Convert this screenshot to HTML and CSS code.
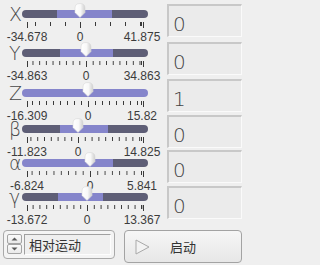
FILE: index.html
```html
<!DOCTYPE html>
<html>
<head>
<meta charset="utf-8">
<link rel="stylesheet" href="styles.css">
</head>
<body>
<svg class="defs" width="0" height="0" aria-hidden="true">
  <defs>
    <linearGradient id="tg" x1="0" x2="1" y1="0" y2="0">
      <stop offset="0" stop-color="#ffffff"/>
      <stop offset="0.55" stop-color="#f8f8f8"/>
      <stop offset="1" stop-color="#cfcfcf"/>
    </linearGradient>
  </defs>
</svg>
<div class="panel">
  <div class="sliders">
    <div class="slider" style="--x:80px;--step:15px;--a:35px;--b:90px">
      <div class="head"><span class="axis">X</span><div class="track"></div></div>
      <div class="ticks"></div>
      <div class="labels"><span class="lo">-34.678</span><span class="zero">0</span><span class="hi">41.875</span></div>
      <svg class="thumb" viewBox="0 0 12 15"><path d="M1 5 Q1 0.5 6 0.5 Q11 0.5 11 5 L11 9.5 L6 14.5 L1 9.5 Z" fill="url(#tg)" stroke="#d6d6d6" stroke-width="0.6"/></svg>
    </div>
    <div class="slider" style="--x:86px;--step:6.7px;--a:38px;--b:91px">
      <div class="head"><span class="axis">Y</span><div class="track"></div></div>
      <div class="ticks"></div>
      <div class="labels"><span class="lo">-34.863</span><span class="zero">0</span><span class="hi">34.863</span></div>
      <svg class="thumb" viewBox="0 0 12 15"><path d="M1 5 Q1 0.5 6 0.5 Q11 0.5 11 5 L11 9.5 L6 14.5 L1 9.5 Z" fill="url(#tg)" stroke="#d6d6d6" stroke-width="0.6"/></svg>
    </div>
    <div class="slider full" style="--x:88px;--step:7px;--a:0px;--b:126px">
      <div class="head"><span class="axis">Z</span><div class="track"></div></div>
      <div class="ticks"></div>
      <div class="labels"><span class="lo">-16.309</span><span class="zero">0</span><span class="hi">15.82</span></div>
      <svg class="thumb" viewBox="0 0 12 15"><path d="M1 5 Q1 0.5 6 0.5 Q11 0.5 11 5 L11 9.5 L6 14.5 L1 9.5 Z" fill="url(#tg)" stroke="#d6d6d6" stroke-width="0.6"/></svg>
    </div>
    <div class="slider" style="--x:78px;--step:6.8px;--a:38px;--b:86px">
      <div class="head"><span class="axis">β</span><div class="track"></div></div>
      <div class="ticks"></div>
      <div class="labels"><span class="lo">-11.823</span><span class="zero">0</span><span class="hi">14.825</span></div>
      <svg class="thumb" viewBox="0 0 12 15"><path d="M1 5 Q1 0.5 6 0.5 Q11 0.5 11 5 L11 9.5 L6 14.5 L1 9.5 Z" fill="url(#tg)" stroke="#d6d6d6" stroke-width="0.6"/></svg>
    </div>
    <div class="slider" style="--x:90px;--step:7.3px;--a:0px;--b:91px">
      <div class="head"><span class="axis">α</span><div class="track"></div></div>
      <div class="ticks"></div>
      <div class="labels"><span class="lo">-6.824</span><span class="zero">0</span><span class="hi">5.841</span></div>
      <svg class="thumb" viewBox="0 0 12 15"><path d="M1 5 Q1 0.5 6 0.5 Q11 0.5 11 5 L11 9.5 L6 14.5 L1 9.5 Z" fill="url(#tg)" stroke="#d6d6d6" stroke-width="0.6"/></svg>
    </div>
    <div class="slider" style="--x:87px;--step:6.8px;--a:36px;--b:81px">
      <div class="head"><span class="axis">γ</span><div class="track"></div></div>
      <div class="ticks"></div>
      <div class="labels"><span class="lo">-13.672</span><span class="zero">0</span><span class="hi">13.367</span></div>
      <svg class="thumb" viewBox="0 0 12 15"><path d="M1 5 Q1 0.5 6 0.5 Q11 0.5 11 5 L11 9.5 L6 14.5 L1 9.5 Z" fill="url(#tg)" stroke="#d6d6d6" stroke-width="0.6"/></svg>
    </div>
  </div>
  <div class="readouts">
    <div class="readout">0</div>
    <div class="readout">0</div>
    <div class="readout">1</div>
    <div class="readout">0</div>
    <div class="readout">0</div>
    <div class="readout">0</div>
  </div>
  <div class="controls">
    <div class="combo">
      <div class="spin">
        <span class="spin-btn"><svg viewBox="0 0 7 4" class="arrow"><path d="M0.5 3.5 L3.5 0.5 L6.5 3.5 Z" fill="#5a5a5a"/></svg></span>
        <span class="spin-btn"><svg viewBox="0 0 7 4" class="arrow"><path d="M0.5 0.5 L3.5 3.5 L6.5 0.5 Z" fill="#5a5a5a"/></svg></span>
      </div>
      <div class="field">相对运动</div>
    </div>
    <div class="button">
      <svg class="play" viewBox="0 0 15 16"><path d="M1 1 L14 8 L1 15 Z" fill="#f3f3f3" stroke="#a9a9a9" stroke-width="1" stroke-linejoin="round"/></svg>
      <span class="btn-text">启动</span>
    </div>
  </div>
</div>
</body>
</html>
```

FILE: styles.css
```css
body {
  margin: 0;
  background: #efefef;
  font-family: "Liberation Sans", Arial, sans-serif;
  color: #3a3a3a;
}

.defs {
  position: absolute;
  width: 0;
  height: 0;
}

.panel {
  display: grid;
  grid-template-columns: 167px 75px;
  width: 247px;
  height: 265px;
  overflow: hidden;
}

.sliders {
  padding-top: 6px;
}

.slider {
  position: relative;
  height: 39px;
  --dark: #5e5e76;
  --light: #8585cb;
}
.slider:nth-child(2) { height: 40px; }
.slider:nth-child(3) { height: 36px; }
.slider:nth-child(4) { height: 34px; }
.slider:nth-child(5) { height: 34px; }
.slider:nth-child(6) { height: 38px; }

.head {
  display: flex;
  align-items: center;
  height: 16px;
}

.axis {
  width: 22px;
  box-sizing: border-box;
  padding-left: 9px;
  font-family: "DejaVu Sans", sans-serif;
  font-weight: 200;
  font-size: 19px;
  line-height: 16px;
  color: #474747;
}

.track {
  width: 126px;
  height: 8px;
  border-radius: 4px;
  background: linear-gradient(to right,
    var(--dark) var(--a),
    var(--light) var(--a) var(--b),
    var(--dark) var(--b));
}

.ticks {
  margin-left: 27px;
  width: 117px;
  height: 6px;
  --z: calc(var(--x) - 27px);
  background:
    linear-gradient(#3a3a3a, #3a3a3a) 0 0 / 1px 6px no-repeat,
    linear-gradient(#3a3a3a, #3a3a3a) var(--z) 0 / 1px 6px no-repeat,
    linear-gradient(#3a3a3a, #3a3a3a) 100% 0 / 1px 6px no-repeat,
    linear-gradient(#3a3a3a, #3a3a3a) calc(100% - 2px) 0 / 1px 4px no-repeat,
    linear-gradient(to right, #3a3a3a 1px, transparent 1px) var(--z) 0 / var(--step) 4px repeat-x;
}

.labels {
  position: relative;
  height: 14px;
  margin-top: 2px;
  font-size: 12px;
  line-height: 14px;
  color: #3c3c3c;
}

.labels span {
  position: absolute;
  top: 0;
  transform: translateX(-50%);
  white-space: nowrap;
}

.lo { left: 27px; }
.hi { left: 142px; }
.zero { left: var(--x); }

.thumb {
  position: absolute;
  top: -3px;
  left: calc(var(--x) - 6px);
  width: 12px;
  height: 15px;
}

.readouts {
  display: flex;
  flex-direction: column;
  padding-top: 4px;
}

.readout {
  height: 33px;
  box-sizing: border-box;
  border-top: 2px solid #c8c8c8;
  border-left: 2px solid #c8c8c8;
  border-right: 1px solid #fafafa;
  border-bottom: 1px solid #fafafa;
  background: #ebebeb;
  padding: 8px 0 0 4px;
  font-family: "DejaVu Sans", sans-serif;
  font-weight: 200;
  font-size: 20px;
  line-height: 20px;
  color: #444;
}
.readout:nth-child(2) { margin-top: 5px; }
.readout:nth-child(3) { margin-top: 4px; }
.readout:nth-child(4) { margin-top: 3px; }
.readout:nth-child(5) { margin-top: 2px; }
.readout:nth-child(6) { margin-top: 3px; }

.controls {
  grid-column: 1 / -1;
  display: flex;
  align-items: flex-start;
  padding-left: 3px;
  margin-top: 1px;
}

.combo {
  width: 114px;
  height: 29px;
  box-sizing: border-box;
  border: 1px solid #a9a9a9;
  border-radius: 4px;
  background: #f4f4f4;
  padding: 3px;
  display: flex;
  gap: 2px;
}

.spin {
  width: 15px;
  height: 20px;
  display: flex;
  flex-direction: column;
}

.spin-btn {
  flex: 1;
  display: flex;
  align-items: center;
  justify-content: center;
  box-sizing: border-box;
  border: 1px solid #a4a4a4;
  border-radius: 2px;
  background: linear-gradient(#fbfbfb, #e9e9e9);
}

.arrow {
  width: 7px;
  height: 4px;
}

.field {
  flex: 1;
  height: 21px;
  box-sizing: border-box;
  border-top: 1px solid #a0a0a0;
  border-left: 1px solid #a0a0a0;
  border-right: 1px solid #fdfdfd;
  border-bottom: 1px solid #fdfdfd;
  background: #efefef;
  padding-left: 4px;
  font-family: "Noto Sans CJK SC", sans-serif;
  font-size: 13px;
  line-height: 19px;
  color: #333;
}

.button {
  margin-left: 9px;
  width: 120px;
  height: 33px;
  box-sizing: border-box;
  border: 1px solid #a3a3a3;
  border-radius: 4px;
  background: linear-gradient(#f6f6f6, #e7e7e7);
  display: grid;
  grid-template-columns: 1fr auto 1fr;
  align-items: center;
  padding-left: 10px;
}

.play {
  width: 15px;
  height: 16px;
}

.btn-text {
  font-family: "Noto Sans CJK SC", sans-serif;
  font-size: 13px;
  line-height: 16px;
  color: #333;
  padding-right: 10px;
}
```
